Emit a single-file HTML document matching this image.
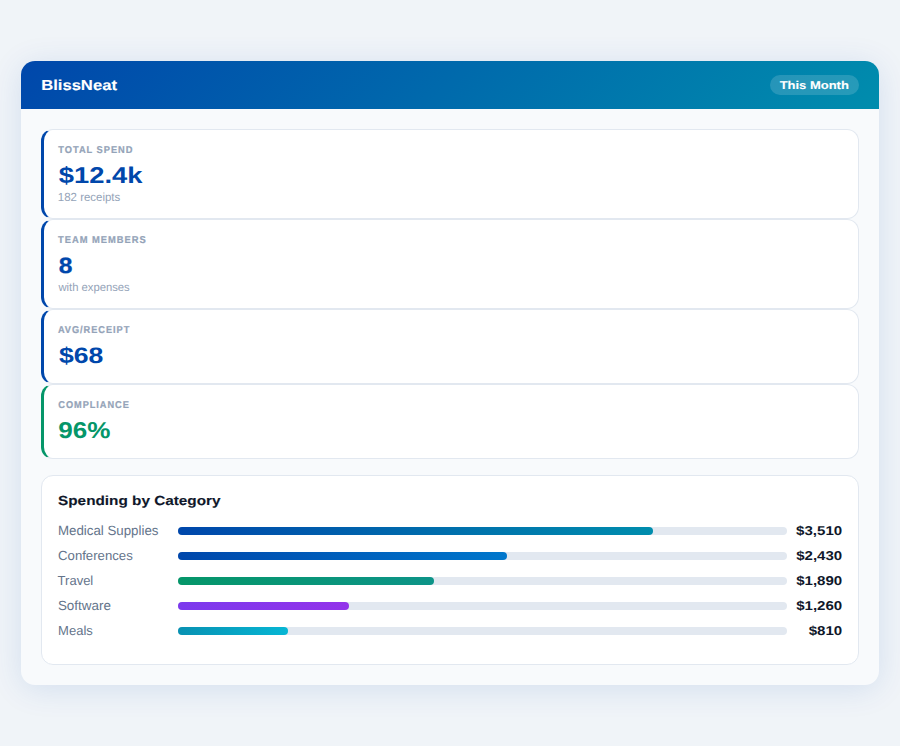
<!DOCTYPE html>
<html><head><meta charset="utf-8">
<style>
*{box-sizing:border-box;margin:0;padding:0}
html,body{width:900px;height:746px;overflow:hidden}
body{background:#f0f4f8;font-family:"Liberation Sans",sans-serif;position:relative;text-rendering:geometricPrecision}
.t{display:inline-block;white-space:nowrap;transform-origin:0 0}
.wrap{position:absolute;left:21px;top:61px;width:858px;height:624px;background:#f8fafc;border-radius:14px;box-shadow:0 4px 32px rgba(0,71,171,0.12);overflow:hidden}
.hdr{height:48px;background:linear-gradient(135deg,#0047ab 0%,#008dad 100%);position:relative}
.brand{-webkit-text-stroke:0.12px #fff;position:absolute;left:20px;top:16px;line-height:16px;font-size:14.8px;font-weight:bold;color:#fff}
.badge{position:absolute;right:20px;top:14px;width:89px;height:20px;border-radius:10px;background:rgba(255,255,255,0.15)}
.badge .t{-webkit-text-stroke:0.1px #fff;position:absolute;left:10px;top:0;line-height:21px;color:#fff;font-size:11.6px;font-weight:bold}
.body{padding:20px}
.card{background:#fff;border:1px solid #e2e8f0;border-left:3px solid #0047ab;border-radius:12px;padding:15px 14px}
.card.g{border-left-color:#059669}
.lab{-webkit-text-stroke:0.22px #94a3b8;font-size:9.6px;line-height:10px;height:10px;font-weight:bold;color:#94a3b8;letter-spacing:1px;text-transform:uppercase}
.val{-webkit-text-stroke:0.02px currentColor;font-size:23.3px;line-height:25px;height:25px;font-weight:bold;color:#0047ab;margin-top:8px}
.g .val{color:#059669}
#v2{-webkit-text-stroke:0.3px #0047ab}
.sub{font-size:10.4px;line-height:11px;height:11px;color:#94a3b8;margin-top:4px}
.cat{margin-top:16px;background:#fff;border:1px solid #e2e8f0;border-radius:12px;padding:17px 16px 15px 16px;height:190px}
.ttl{-webkit-text-stroke:0.12px #0f172a;font-size:13.7px;line-height:15px;height:15px;font-weight:bold;color:#0f172a;margin-bottom:16px}
.row{display:flex;align-items:center;height:14px;margin-bottom:11px}
.rl{width:120px;font-size:12.5px;line-height:14px;height:14px;color:#64748b}
.tr{width:609px;height:8px;border-radius:4px;background:#e2e8f0;position:relative}
.fill{position:absolute;left:0;top:0;height:8px;border-radius:4px}
.amt{width:55px;text-align:right;font-size:12.7px;line-height:14px;height:14px;font-weight:bold;color:#0f172a}
.amt .t{transform-origin:100% 0}
</style></head><body>
<div class="wrap">
<div class="hdr"><div class="brand"><span class="t" id="brand" style="transform:translate(0.13px,1.00px) scale(1.1238,0.9800)">BlissNeat</span></div><div class="badge"><span class="t" id="badge" style="transform:translate(-0.34px,1.00px) scale(1.1193,0.9616)">This Month</span></div></div>
<div class="body">
<div class="card"><div class="lab"><span class="t" id="l1" style="transform:translate(0.32px,1.00px) scale(0.9669,1.0308)">Total Spend</span></div><div class="val"><span class="t" id="v1" style="transform:translate(0.79px,0.00px) scale(1.1734,0.9784)">$12.4k</span></div><div class="sub"><span class="t" id="s1" style="transform:translate(-0.14px,0.00px) scale(1.1021,1.1338)">182 receipts</span></div></div>
<div class="card"><div class="lab"><span class="t" id="l2" style="transform:translate(0.04px,1.00px) scale(0.9747,1.0382)">Team Members</span></div><div class="val"><span class="t" id="v2" style="transform:translate(0.78px,1.00px) scale(1.0567,0.9459)">8</span></div><div class="sub"><span class="t" id="s2" style="transform:translate(0.38px,0.00px) scale(1.0837,1.1043)">with expenses</span></div></div>
<div class="card"><div class="lab"><span class="t" id="l3" style="transform:translate(-0.07px,1.00px) scale(0.9597,1.0407)">Avg/Receipt</span></div><div class="val"><span class="t" id="v3" style="transform:translate(0.88px,1.00px) scale(1.1425,0.9593)">$68</span></div></div>
<div class="card g"><div class="lab"><span class="t" id="l4" style="transform:translate(0.29px,1.00px) scale(0.9596,1.0273)">Compliance</span></div><div class="val"><span class="t" id="v4" style="transform:translate(0.17px,0.00px) scale(1.1196,0.9837)">96%</span></div></div>
<div class="cat">
<div class="ttl"><span class="t" id="title" style="transform:translate(0.07px,1.00px) scale(1.1180,0.9582)">Spending by Category</span></div>
<div class="row"><div class="rl"><span class="t" id="r1" style="transform:translate(-0.05px,-1.00px) scale(1.0637,1.0725)">Medical Supplies</span></div><div class="tr"><div class="fill" style="width:78%;background:linear-gradient(90deg,#0047ab,#008dad)"></div></div><div class="amt"><span class="t" id="a1" style="transform:translate(0.35px,0.00px) scale(1.1880,1.0143)">$3,510</span></div></div>
<div class="row"><div class="rl"><span class="t" id="r2" style="transform:translate(0.06px,-1.00px) scale(1.0534,1.0553)">Conferences</span></div><div class="tr"><div class="fill" style="width:54%;background:linear-gradient(90deg,#0047ab,#0077cc)"></div></div><div class="amt"><span class="t" id="a2" style="transform:translate(0.32px,0.00px) scale(1.1828,1.0029)">$2,430</span></div></div>
<div class="row"><div class="rl"><span class="t" id="r3" style="transform:translate(-0.39px,-1.00px) scale(1.0405,1.0540)">Travel</span></div><div class="tr"><div class="fill" style="width:42%;background:linear-gradient(90deg,#059669,#0d9488)"></div></div><div class="amt"><span class="t" id="a3" style="transform:translate(0.42px,0.00px) scale(1.1870,1.0065)">$1,890</span></div></div>
<div class="row"><div class="rl"><span class="t" id="r4" style="transform:translate(-0.09px,-1.00px) scale(1.0738,1.0623)">Software</span></div><div class="tr"><div class="fill" style="width:28%;background:linear-gradient(90deg,#7c3aed,#9333ea)"></div></div><div class="amt"><span class="t" id="a4" style="transform:translate(0.41px,0.00px) scale(1.1874,1.0066)">$1,260</span></div></div>
<div class="row"><div class="rl"><span class="t" id="r5" style="transform:translate(0.11px,-1.00px) scale(1.0409,1.0474)">Meals</span></div><div class="tr"><div class="fill" style="width:18%;background:linear-gradient(90deg,#0891b2,#06b6d4)"></div></div><div class="amt"><span class="t" id="a5" style="transform:translate(-0.00px,0.00px) scale(1.1869,1.0034)">$810</span></div></div>
</div>
</div>
</div>
</body></html>
